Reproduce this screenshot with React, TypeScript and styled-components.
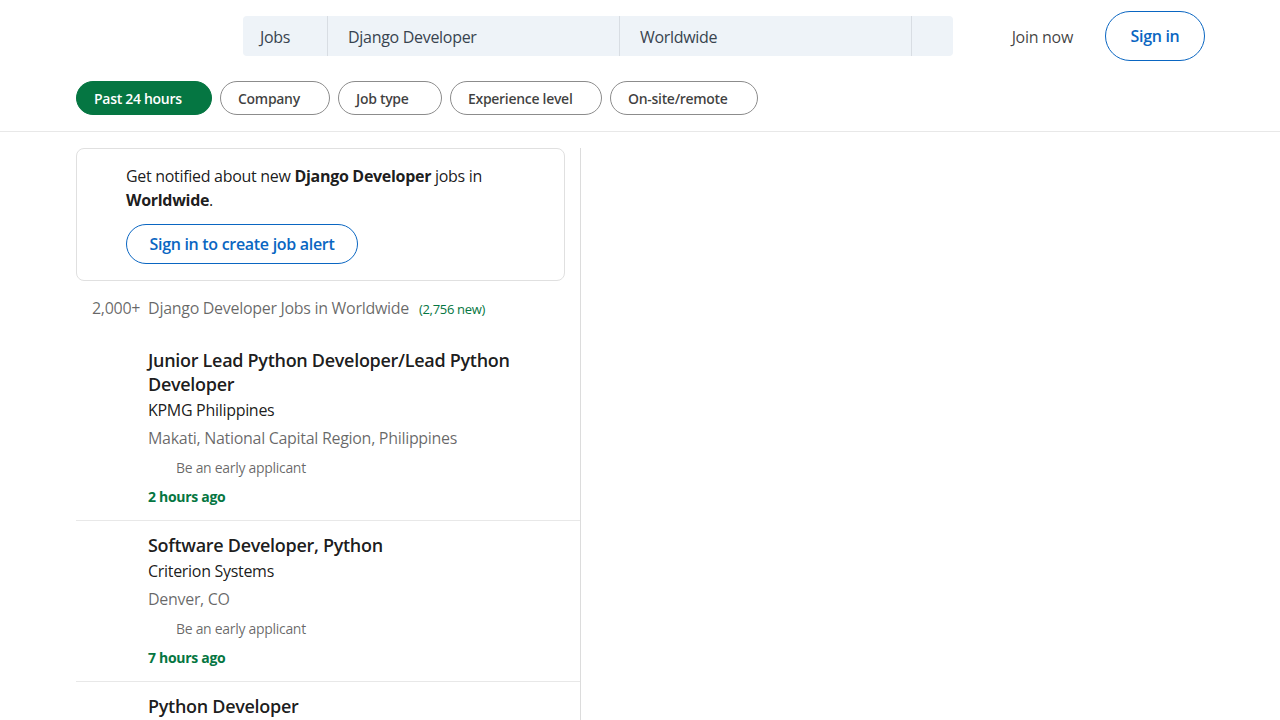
import React from "react";
import styled, { createGlobalStyle } from "styled-components";

const Global = createGlobalStyle`
  * { box-sizing: border-box; }
  body {
    margin: 0;
    background: #fff;
    font-family: "Open Sans", "Noto Sans", sans-serif;
    color: rgba(0,0,0,0.9);
    letter-spacing: -0.3px;
  }
  button { letter-spacing: inherit; }
`;

const Header = styled.header`
  height: 72px;
  display: flex;
  align-items: center;
  padding: 0 75px 0 243px;
`;

const SearchBar = styled.div`
  display: flex;
  width: 710px;
  height: 40px;
  background: #eef3f8;
  border-radius: 4px;
`;

const SearchSeg = styled.div<{ $w: number; $last?: boolean }>`
  width: ${(p) => p.$w}px;
  display: flex;
  align-items: center;
  padding: 2px 0 0 ${(p) => (p.$w < 100 ? 17 : 20)}px;
  font-size: 16px;
  color: #38434f;
  border-right: ${(p) => (p.$last ? "none" : "1px solid #d8dde3")};
`;

const Right = styled.div`
  margin-left: auto;
  display: flex;
  align-items: center;
  gap: 32px;
`;

const JoinLink = styled.a`
  font-size: 16px;
  font-weight: 500;
  color: rgba(0,0,0,0.75);
  text-decoration: none;
  padding-top: 1px;
`;

const OutlineBtn = styled.button<{ $h: number; $w: number }>`
  width: ${(p) => p.$w}px;
  height: ${(p) => p.$h}px;
  border-radius: ${(p) => p.$h / 2}px;
  border: 1px solid #0a66c2;
  background: #fff;
  color: #0a66c2;
  font-family: inherit;
  font-size: 16px;
  font-weight: 600;
  padding: 0;
`;

const Filters = styled.nav`
  display: flex;
  gap: 8px;
  padding: 9px 76px 16px;
  border-bottom: 1px solid #e8e8e8;
`;

const Pill = styled.button<{ $active?: boolean; $w: number }>`
  width: ${(p) => p.$w}px;
  height: 34px;
  border-radius: 17px;
  text-align: left;
  padding: 1px 0 0 17px;
  font-family: inherit;
  font-size: 14px;
  font-weight: 600;
  border: 1px solid ${(p) => (p.$active ? "#057642" : "#8c8c8c")};
  background: ${(p) => (p.$active ? "#057642" : "#fff")};
  color: ${(p) => (p.$active ? "#fff" : "rgba(0,0,0,0.75)")};
`;

const Main = styled.main`
  padding: 16px 0 0 76px;
`;

const LeftCol = styled.section`
  width: 505px;
  border-right: 1px solid #dcdcdc;
  min-height: 600px;
`;

const AlertCard = styled.div`
  width: 489px;
  border: 1px solid #e0e0e0;
  border-radius: 8px;
  padding: 15px 20px 16px 49px;
`;

const AlertText = styled.p`
  margin: 0 0 12px;
  font-size: 16px;
  line-height: 24px;
  color: rgba(0,0,0,0.9);
  strong { font-weight: 700; }
`;

const Count = styled.h1`
  margin: 0;
  padding: 15px 0 15px 16px;
  font-size: 16px;
  line-height: 24px;
  font-weight: 400;
  color: rgba(0,0,0,0.6);
  display: flex;
  align-items: baseline;
  gap: 8px;
`;

const NewCount = styled.span`
  font-size: 13px;
  color: #057642;
  margin-left: 2px;
`;

const JobCard = styled.article`
  padding: 12px 20px 13px 72px;
  border-bottom: 1px solid #e8e8e8;
`;

const Title = styled.h3`
  margin: 0;
  font-size: 18px;
  line-height: 24px;
  font-weight: 600;
  color: rgba(0,0,0,0.9);
  max-width: 380px;
`;

const Company = styled.h4`
  margin: 4px 0 0;
  font-size: 16px;
  line-height: 20px;
  font-weight: 400;
  color: rgba(0,0,0,0.9);
`;

const Location = styled.div`
  margin-top: 8px;
  font-size: 16px;
  line-height: 20px;
  color: rgba(0,0,0,0.6);
`;

const Insight = styled.div`
  margin-top: 10px;
  padding-left: 28px;
  font-size: 14px;
  line-height: 20px;
  color: rgba(0,0,0,0.6);
`;

const Time = styled.time`
  display: block;
  margin-top: 9px;
  font-size: 14px;
  line-height: 20px;
  font-weight: 700;
  color: #057642;
`;

const jobs = [
  { t: "Junior Lead Python Developer/Lead Python Developer", c: "KPMG Philippines", l: "Makati, National Capital Region, Philippines", time: "2 hours ago" },
  { t: "Software Developer, Python", c: "Criterion Systems", l: "Denver, CO", time: "7 hours ago" },
  { t: "Python Developer", c: "Tech Company", l: "Remote", time: "8 hours ago" },
];

export default function App() {
  return (
    <>
      <Global />
      <Header>
        <SearchBar>
          <SearchSeg $w={85}>Jobs</SearchSeg>
          <SearchSeg $w={292}>Django Developer</SearchSeg>
          <SearchSeg $w={292}>Worldwide</SearchSeg>
          <SearchSeg $w={41} $last />
        </SearchBar>
        <Right>
          <JoinLink href="#">Join now</JoinLink>
          <OutlineBtn $h={50} $w={100}>Sign in</OutlineBtn>
        </Right>
      </Header>
      <Filters>
        <Pill $active $w={136}>Past 24 hours</Pill>
        <Pill $w={110}>Company</Pill>
        <Pill $w={104}>Job type</Pill>
        <Pill $w={152}>Experience level</Pill>
        <Pill $w={148}>On-site/remote</Pill>
      </Filters>
      <Main>
        <LeftCol>
          <AlertCard>
            <AlertText>
              Get notified about new <strong>Django Developer</strong> jobs in <strong>Worldwide</strong>.
            </AlertText>
            <OutlineBtn $h={40} $w={232}>Sign in to create job alert</OutlineBtn>
          </AlertCard>
          <Count>
            <span>2,000+</span>
            <span>Django Developer Jobs in Worldwide</span>
            <NewCount>(2,756 new)</NewCount>
          </Count>
          {jobs.map((j) => (
            <JobCard key={j.t}>
              <Title>{j.t}</Title>
              <Company>{j.c}</Company>
              <Location>{j.l}</Location>
              <Insight>Be an early applicant</Insight>
              <Time>{j.time}</Time>
            </JobCard>
          ))}
        </LeftCol>
      </Main>
    </>
  );
}
